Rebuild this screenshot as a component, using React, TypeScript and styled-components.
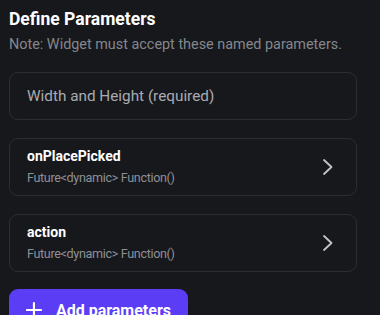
import styled, { createGlobalStyle } from "styled-components";

const GlobalStyle = createGlobalStyle`
  html, body {
    margin: 0;
    padding: 0;
    background: #17181c;
    font-family: Roboto, "Noto Sans", sans-serif;
    overflow: hidden;
  }
`;

const Panel = styled.div`
  display: flex;
  flex-direction: column;
  padding: 7px 23px 0 9px;
`;

const Title = styled.h2`
  margin: 0;
  font-size: 17.5px;
  font-weight: 700;
  color: #ffffff;
  line-height: 24px;
`;

const Note = styled.p`
  margin: 5px 0 0;
  font-size: 14.4px;
  color: #84878d;
  line-height: 18px;
`;

const List = styled.div`
  display: flex;
  flex-direction: column;
  gap: 18px;
  margin-top: 18px;
`;

const Field = styled.div`
  height: 48px;
  box-sizing: border-box;
  border: 1px solid #2b2d32;
  border-radius: 9px;
  display: flex;
  align-items: center;
  padding: 0 17px;
  font-size: 15.3px;
  color: #a8abb1;
`;

const ParamCard = styled.div`
  height: 58px;
  box-sizing: border-box;
  border: 1px solid #2b2d32;
  border-radius: 9px;
  display: flex;
  align-items: center;
  justify-content: space-between;
  padding: 0 22px 0 17px;
`;

const ParamText = styled.div`
  display: flex;
  flex-direction: column;
  gap: 6px;
  margin-top: -2px;
`;

const ParamName = styled.span`
  font-size: 14px;
  font-weight: 700;
  color: #ffffff;
  line-height: 16px;
`;

const ParamType = styled.span`
  font-size: 12.6px;
  letter-spacing: -0.35px;
  color: #8d9096;
  line-height: 15px;
`;

const AddButton = styled.button`
  margin-top: 17px;
  align-self: flex-start;
  flex-shrink: 0;
  width: 179px;
  height: 42px;
  border: 0;
  border-radius: 9px;
  background: #5b3df6;
  color: #ffffff;
  display: flex;
  align-items: center;
  gap: 14px;
  padding: 0 17px;
  font-family: inherit;
  font-size: 16px;
  font-weight: 700;
  white-space: nowrap;
  cursor: pointer;
`;

const Chevron = () => (
  <svg width="12" height="18" viewBox="0 0 12 18" fill="none">
    <path d="M2 2l7.5 7-7.5 7" stroke="#c3c4c8" strokeWidth="1.8" strokeLinecap="round" strokeLinejoin="round" />
  </svg>
);

const Plus = () => (
  <svg width="18" height="18" viewBox="0 0 18 18" fill="none">
    <path d="M9 1v16M1 9h16" stroke="#ffffff" strokeWidth="2.4" strokeLinecap="round" />
  </svg>
);

const params = [
  { name: "onPlacePicked", type: "Future<dynamic> Function()" },
  { name: "action", type: "Future<dynamic> Function()" },
];

export default function App() {
  return (
    <>
      <GlobalStyle />
      <Panel>
        <Title>Define Parameters</Title>
        <Note>Note: Widget must accept these named parameters.</Note>
        <List>
          <Field>Width and Height (required)</Field>
          {params.map((p) => (
            <ParamCard key={p.name}>
              <ParamText>
                <ParamName>{p.name}</ParamName>
                <ParamType>{p.type}</ParamType>
              </ParamText>
              <Chevron />
            </ParamCard>
          ))}
        </List>
        <AddButton>
          <Plus />
          Add parameters
        </AddButton>
      </Panel>
    </>
  );
}
